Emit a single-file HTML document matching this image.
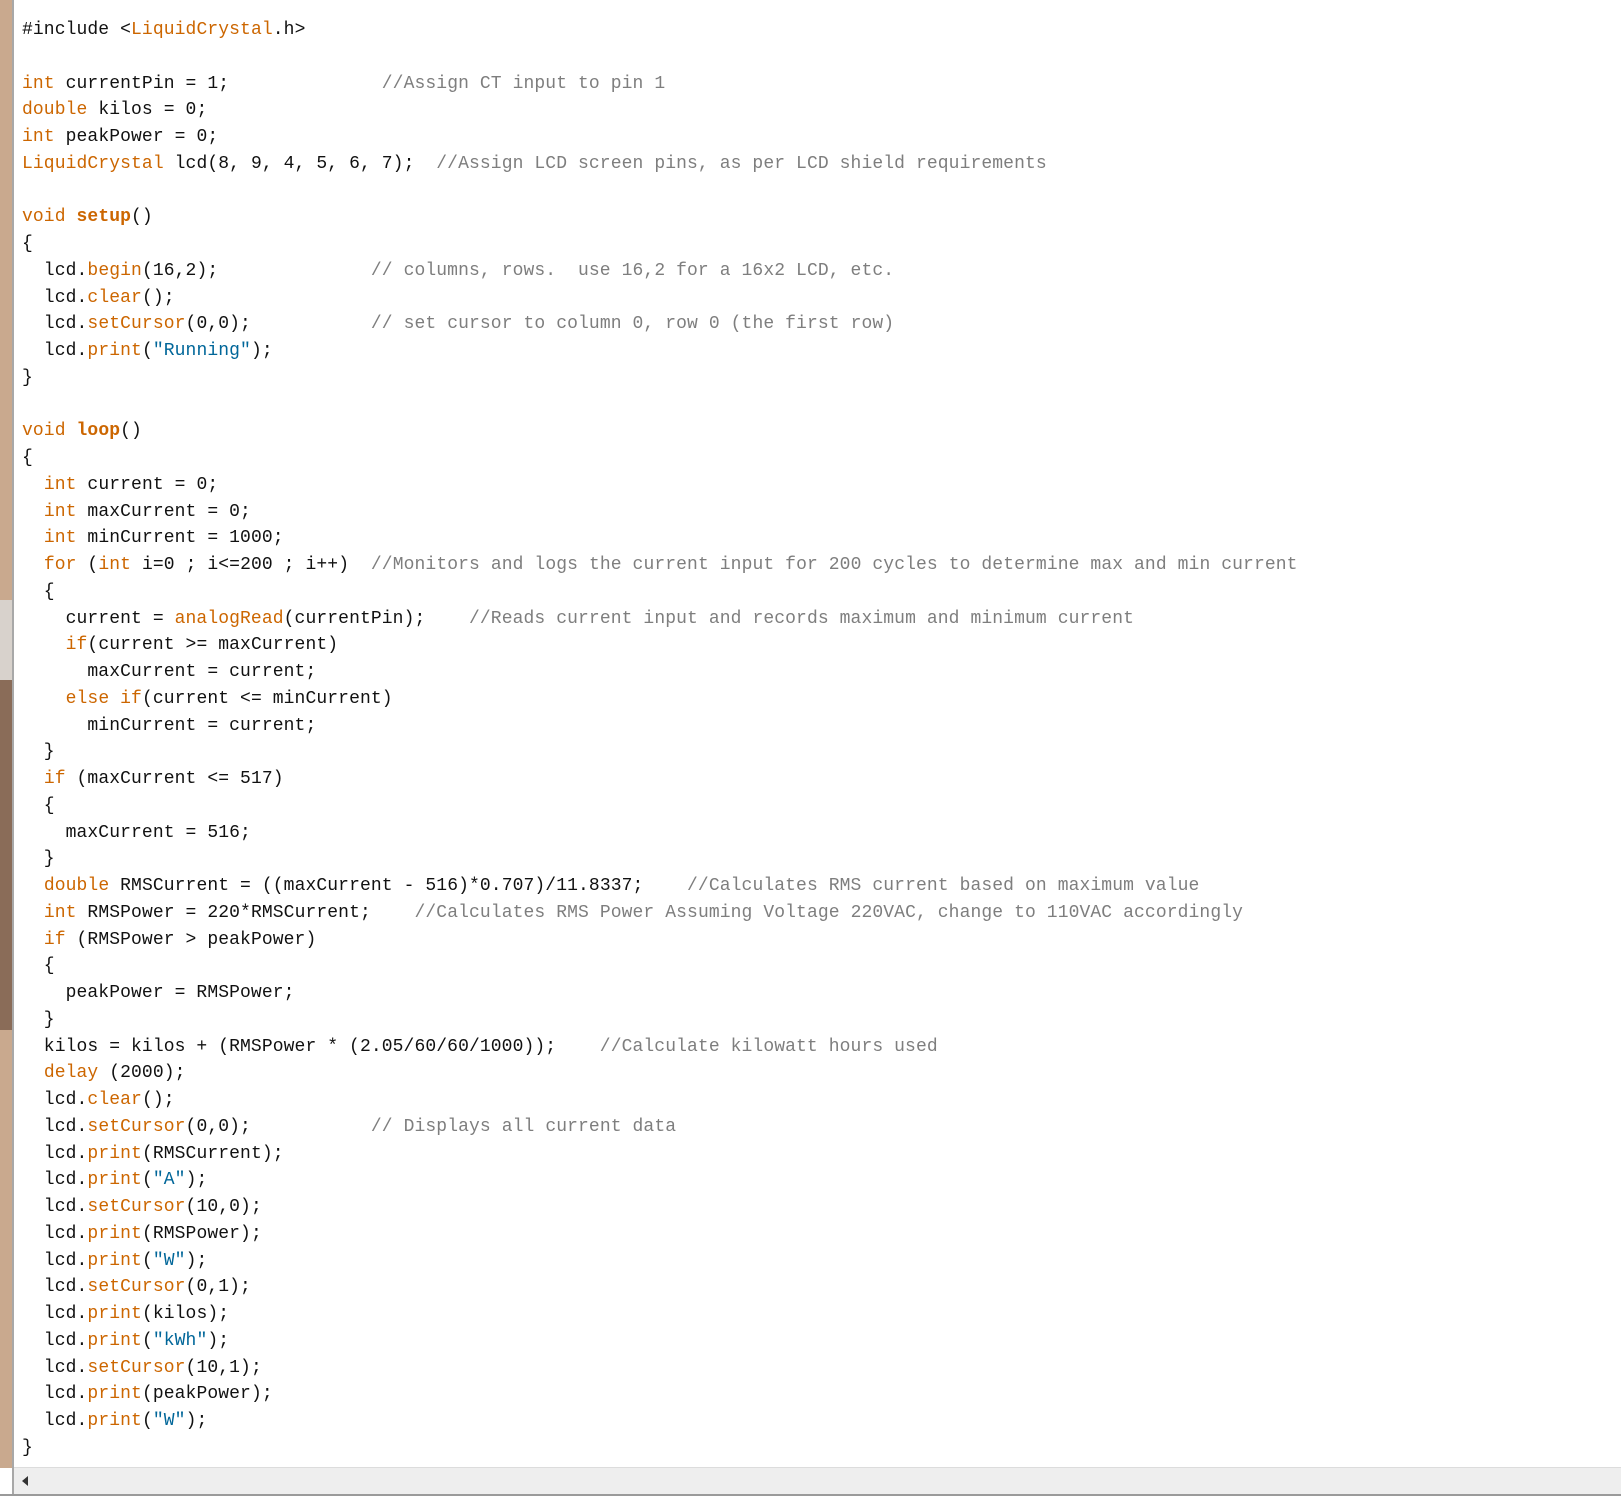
<!DOCTYPE html>
<html><head><meta charset="utf-8"><style>
html,body{margin:0;padding:0;width:1621px;height:1496px;overflow:hidden;background:#fff;}
.g{position:absolute;left:0;top:0;width:12px;height:1468px;background:#c9a98e;}
.g2{position:absolute;left:0;top:600px;width:12px;height:80px;background:#d8d2cc;}
.g3{position:absolute;left:0;top:680px;width:12px;height:350px;background:#8a6c58;}
.gl{position:absolute;left:12px;top:0;width:2px;height:1496px;background:#a8a8a8;}
pre{position:absolute;left:22px;top:17px;margin:0;font-family:"Liberation Mono",monospace;font-size:18px;letter-spacing:0.1px;line-height:26.75px;color:#111;}
.k{color:#cc6600}.b{color:#cc6600;font-weight:bold}.s{color:#006699}.c{color:#7e7e7e}
.sb{position:absolute;left:14px;top:1467px;width:1607px;height:27px;background:#eeeeee;border-top:1px solid #dcdcdc;box-sizing:border-box;}
.bl{position:absolute;left:0;top:1494px;width:1621px;height:2px;background:#9a9a9a;}
.ar{position:absolute;left:22px;top:1476px;width:0;height:0;border-top:5px solid transparent;border-bottom:5px solid transparent;border-right:6px solid #333;}
</style></head><body>
<div class="g"></div><div class="g2"></div><div class="g3"></div><div class="gl"></div>
<pre>#include &lt;<span class="k">LiquidCrystal</span>.h&gt;

<span class="k">int</span> currentPin = 1;              <span class="c">//Assign CT input to pin 1</span>
<span class="k">double</span> kilos = 0;
<span class="k">int</span> peakPower = 0;
<span class="k">LiquidCrystal</span> lcd(8, 9, 4, 5, 6, 7);  <span class="c">//Assign LCD screen pins, as per LCD shield requirements</span>

<span class="k">void</span> <span class="b">setup</span>()
{
  lcd.<span class="k">begin</span>(16,2);              <span class="c">// columns, rows.  use 16,2 for a 16x2 LCD, etc.</span>
  lcd.<span class="k">clear</span>();
  lcd.<span class="k">setCursor</span>(0,0);           <span class="c">// set cursor to column 0, row 0 (the first row)</span>
  lcd.<span class="k">print</span>(<span class="s">"Running"</span>);
}

<span class="k">void</span> <span class="b">loop</span>()
{
  <span class="k">int</span> current = 0;
  <span class="k">int</span> maxCurrent = 0;
  <span class="k">int</span> minCurrent = 1000;
  <span class="k">for</span> (<span class="k">int</span> i=0 ; i&lt;=200 ; i++)  <span class="c">//Monitors and logs the current input for 200 cycles to determine max and min current</span>
  {
    current = <span class="k">analogRead</span>(currentPin);    <span class="c">//Reads current input and records maximum and minimum current</span>
    <span class="k">if</span>(current &gt;= maxCurrent)
      maxCurrent = current;
    <span class="k">else</span> <span class="k">if</span>(current &lt;= minCurrent)
      minCurrent = current;
  }
  <span class="k">if</span> (maxCurrent &lt;= 517)
  {
    maxCurrent = 516;
  }
  <span class="k">double</span> RMSCurrent = ((maxCurrent - 516)*0.707)/11.8337;    <span class="c">//Calculates RMS current based on maximum value</span>
  <span class="k">int</span> RMSPower = 220*RMSCurrent;    <span class="c">//Calculates RMS Power Assuming Voltage 220VAC, change to 110VAC accordingly</span>
  <span class="k">if</span> (RMSPower &gt; peakPower)
  {
    peakPower = RMSPower;
  }
  kilos = kilos + (RMSPower * (2.05/60/60/1000));    <span class="c">//Calculate kilowatt hours used</span>
  <span class="k">delay</span> (2000);
  lcd.<span class="k">clear</span>();
  lcd.<span class="k">setCursor</span>(0,0);           <span class="c">// Displays all current data</span>
  lcd.<span class="k">print</span>(RMSCurrent);
  lcd.<span class="k">print</span>(<span class="s">"A"</span>);
  lcd.<span class="k">setCursor</span>(10,0);
  lcd.<span class="k">print</span>(RMSPower);
  lcd.<span class="k">print</span>(<span class="s">"W"</span>);
  lcd.<span class="k">setCursor</span>(0,1);
  lcd.<span class="k">print</span>(kilos);
  lcd.<span class="k">print</span>(<span class="s">"kWh"</span>);
  lcd.<span class="k">setCursor</span>(10,1);
  lcd.<span class="k">print</span>(peakPower);
  lcd.<span class="k">print</span>(<span class="s">"W"</span>);
}</pre>
<div class="sb"></div><div class="ar"></div><div class="bl"></div>
</body></html>
